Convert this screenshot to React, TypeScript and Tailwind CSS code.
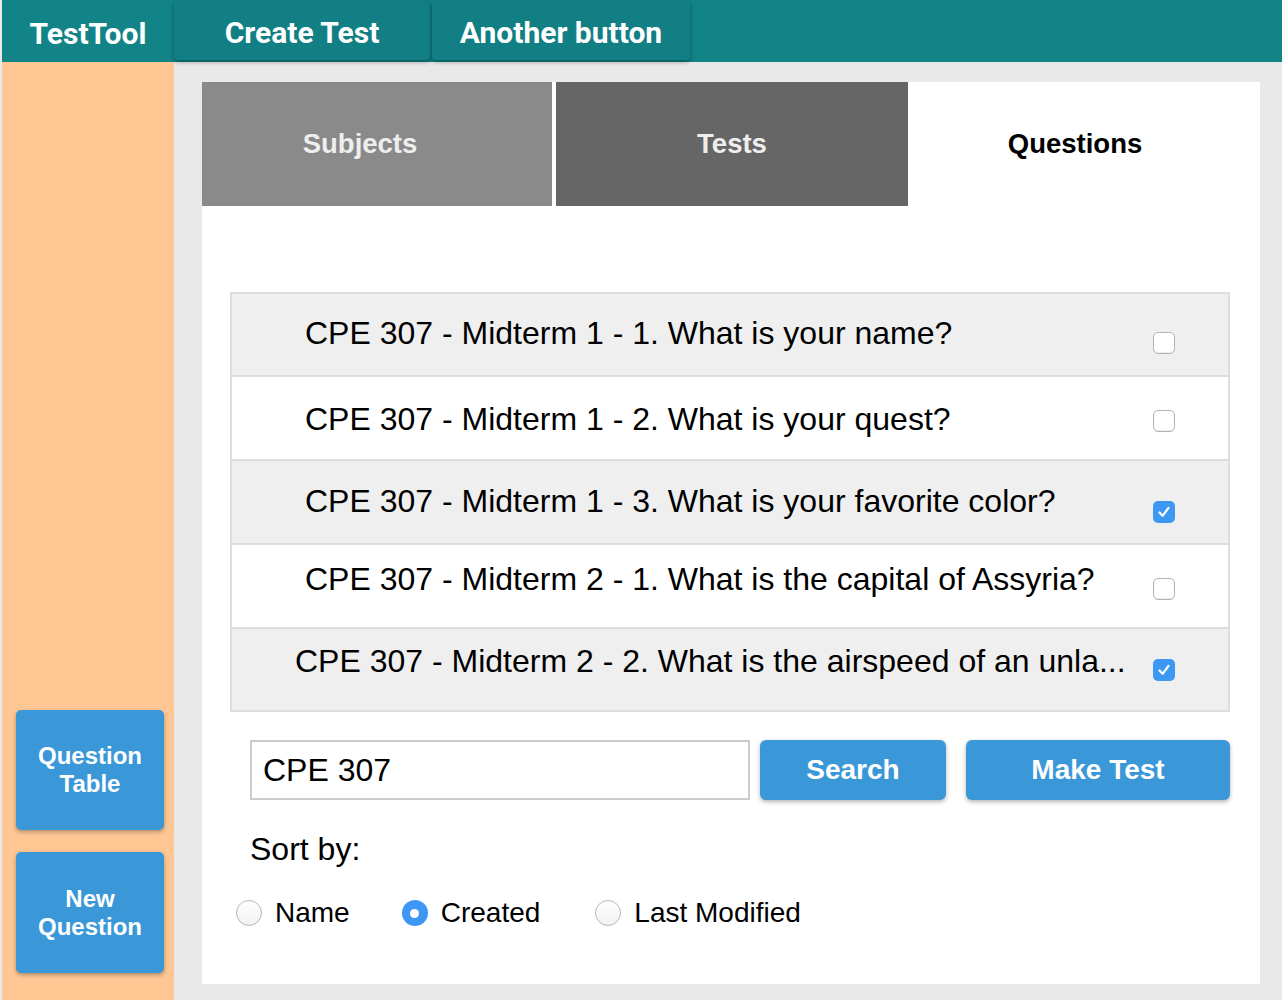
import React, { useState } from 'react';

const rows = [
  { text: 'CPE 307 - Midterm 1 - 1. What is your name?', checked: false, h: 'h-[83px]', t: 'mt-[21px]', c: 'mt-[38px]' },
  { text: 'CPE 307 - Midterm 1 - 2. What is your quest?', checked: false, h: 'h-[84px]', t: 'mt-[24px]', c: 'mt-[33px]' },
  { text: 'CPE 307 - Midterm 1 - 3. What is your favorite color?', checked: true, h: 'h-[84px]', t: 'mt-[22px]', c: 'mt-[40px]' },
  { text: 'CPE 307 - Midterm 2 - 1. What is the capital of Assyria?', checked: false, h: 'h-[84px]', t: 'mt-[16px]', c: 'mt-[33px]' },
  { text: 'CPE 307 - Midterm 2 - 2. What is the airspeed of an unla...', checked: true, h: 'h-[81px]', t: 'mt-[14px]', c: 'mt-[30px]' },
];

const Checkbox = ({ checked }: { checked: boolean }) => (
  checked ? (
    <span className="flex h-[22px] w-[22px] items-center justify-center rounded-[5px] bg-[#3d98f4]">
      <svg width="14" height="14" viewBox="0 0 14 14" fill="none">
        <path d="M2.5 7.5 L5.6 10.8 L11.5 2.8" stroke="white" strokeWidth="2.2" strokeLinecap="round" strokeLinejoin="round" />
      </svg>
    </span>
  ) : (
    <span className="block h-[22px] w-[22px] rounded-[5px] border border-[#b3b3b3] bg-white shadow-[inset_0_-1px_1px_rgba(0,0,0,0.08)]" />
  )
);

const Radio = ({ checked }: { checked: boolean }) => (
  checked ? (
    <span className="flex h-[26px] w-[26px] items-center justify-center rounded-full bg-[#3e97f5]">
      <span className="h-[9px] w-[9px] rounded-full bg-white" />
    </span>
  ) : (
    <span className="block h-[26px] w-[26px] rounded-full border border-[#b8b8b8] bg-gradient-to-b from-white to-[#f1f1f1]" />
  )
);

const App = () => {
  const [sort] = useState('Created');

  return (
    <div className="flex h-[1000px] w-[1282px] flex-col overflow-hidden bg-[#e9e9e9] pl-[2px] font-['Liberation_Sans',Arial,sans-serif]">
      <header className="flex h-[62px] shrink-0 bg-[#128387] font-['Roboto',sans-serif] text-[30px] font-bold text-white">
        <div className="flex w-[172px] items-center justify-center pt-[4px]">TestTool</div>
        <button type="button" className="mt-[1px] flex h-[59px] w-[256px] items-center justify-center rounded-[4px] bg-[#117f83] pt-[3px] shadow-[0_2px_4px_rgba(0,0,0,0.35)]">
          Create Test
        </button>
        <button type="button" className="ml-[2px] mt-[1px] flex h-[59px] w-[258px] items-center justify-center rounded-[4px] bg-[#117f83] pt-[3px] shadow-[0_2px_4px_rgba(0,0,0,0.35)]">
          Another button
        </button>
      </header>

      <div className="flex flex-1">
        <aside className="flex w-[172px] flex-col justify-end gap-[22px] bg-[#fec794] pb-[27px] pl-[14px]">
          <button type="button" className="h-[120px] w-[148px] rounded-[5px] bg-[#3b98d8] text-[24px] font-bold leading-[28px] text-white shadow-[0_2px_4px_rgba(0,0,0,0.3)]">
            Question
            <br />
            Table
          </button>
          <button type="button" className="h-[121px] w-[148px] rounded-[5px] bg-[#3b98d8] text-[24px] font-bold leading-[28px] text-white shadow-[0_2px_4px_rgba(0,0,0,0.3)]">
            New
            <br />
            Question
          </button>
        </aside>

        <main className="flex-1 pb-[16px] pl-[28px] pr-[22px] pt-[20px]">
          <div className="flex h-full flex-col bg-white">
            <div className="flex h-[124px] text-[27.5px] font-bold">
              <div className="flex w-[350px] items-center justify-center bg-[#8a8a8a] pr-[34px] text-[#eeeeee]">Subjects</div>
              <div className="ml-[4px] flex w-[352px] items-center justify-center bg-[#666666] text-[#eeeeee]">Tests</div>
              <div className="flex flex-1 items-center justify-center pr-[18px] text-black">Questions</div>
            </div>

            <div className="ml-[28px] mr-[30px] mt-[86px] border-2 border-[#dddddd]">
              {rows.map((row, i) => (
                <div
                  key={row.text}
                  className={`flex ${row.h} items-start justify-between ${i % 2 === 0 ? 'bg-[#efefef]' : 'bg-white'} ${i < rows.length - 1 ? 'border-b-2 border-[#dddddd]' : ''} ${i === rows.length - 1 ? 'pl-[63px]' : 'pl-[73px]'} pr-[53px]`}
                >
                  <span className={`${row.t} whitespace-nowrap text-[32px] leading-[36px] text-black`}>{row.text}</span>
                  <span className={row.c}>
                    <Checkbox checked={row.checked} />
                  </span>
                </div>
              ))}
            </div>

            <div className="ml-[48px] mt-[28px] flex items-center">
              <div className="flex h-[60px] w-[500px] items-center border-2 border-[#cccccc] pl-[11px] text-[32px] text-black">CPE 307</div>
              <button type="button" className="ml-[10px] h-[60px] w-[186px] rounded-[6px] bg-[#3b98d8] text-[28px] font-bold text-white shadow-[0_2px_4px_rgba(0,0,0,0.3)]">
                Search
              </button>
              <button type="button" className="ml-[20px] h-[60px] w-[264px] rounded-[6px] bg-[#3b98d8] text-[28px] font-bold text-white shadow-[0_2px_4px_rgba(0,0,0,0.3)]">
                Make Test
              </button>
            </div>

            <div className="ml-[48px] mt-[31px] text-[32px] leading-[36px] text-black">Sort by:</div>

            <div className="ml-[34px] mt-[25px] flex items-center text-[28px] text-black">
              {['Name', 'Created', 'Last Modified'].map((opt) => (
                <label key={opt} className={`flex items-center gap-[13px] ${opt === 'Name' ? 'mr-[52px]' : 'mr-[55px]'}`}>
                  <Radio checked={sort === opt} />
                  <span>{opt}</span>
                </label>
              ))}
            </div>
          </div>
        </main>
      </div>
    </div>
  );
};

export default App;
